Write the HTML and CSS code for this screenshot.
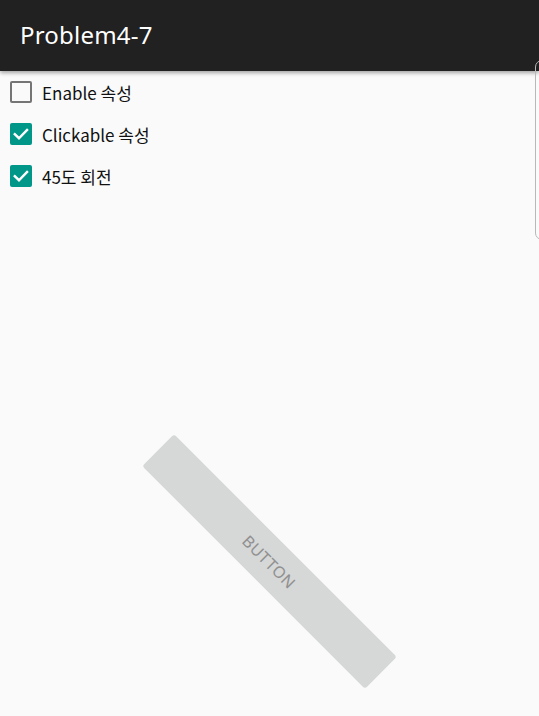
FILE: index.html
```html
<!DOCTYPE html>
<html>
<head>
<meta charset="utf-8">
<link rel="stylesheet" href="styles.css">
</head>
<body>
<div class="app">
  <header class="toolbar"><span class="title">Problem4-7</span></header>
  <main class="content">
    <label class="row"><span class="box"></span><span class="label">Enable 속성</span></label>
    <label class="row"><span class="box checked"><svg viewBox="0 0 24 24" width="22" height="22"><path d="M5.2 12.2 L9.8 16.6 L18.6 7.6" fill="none" stroke="#fff" stroke-width="2.6" stroke-linecap="square"/></svg></span><span class="label">Clickable 속성</span></label>
    <label class="row"><span class="box checked"><svg viewBox="0 0 24 24" width="22" height="22"><path d="M5.2 12.2 L9.8 16.6 L18.6 7.6" fill="none" stroke="#fff" stroke-width="2.6" stroke-linecap="square"/></svg></span><span class="label">45도 회전</span></label>
    <div class="stage">
      <div class="btn">BUTTON</div>
    </div>
  </main>
  <div class="edge"></div>
</div>
</body>
</html>
```
FILE: styles.css
```css
html, body { margin: 0; padding: 0; }
body {
  width: 539px; height: 716px; overflow: hidden;
  background: #fafafa;
  font-family: "Noto Sans", "Noto Sans CJK KR", sans-serif;
}
.app { position: relative; width: 539px; height: 716px; }
.toolbar {
  height: 71px; background: #212121;
  display: flex; align-items: center; padding-left: 20px;
  box-shadow: 0 2px 4px rgba(0,0,0,0.35);
  position: relative; z-index: 2;
}
.title { color: #fff; font-size: 24px; letter-spacing: 0.2px; margin-top: -2px; }
.content { display: flex; flex-direction: column; padding-top: 10px; }
.row { display: flex; align-items: center; height: 22px; margin-bottom: 20px; padding-left: 10px; }
.box {
  width: 22px; height: 22px; box-sizing: border-box;
  border: 2.5px solid #757575; border-radius: 2px;
  display: flex; align-items: center; justify-content: center;
}
.box.checked { background: #009688; border: none; }
.box svg { display: block; }
.label { margin-left: 10px; font-size: 17px; color: #111; font-family: "Noto Sans CJK KR", sans-serif; }
.stage { display: flex; justify-content: center; margin-top: 332px; }
.btn {
  width: 315px; height: 45px; background: #d6d7d7; border-radius: 3px;
  transform: rotate(45deg);
  display: flex; align-items: center; justify-content: center;
  color: #909090; font-size: 16px; letter-spacing: 0.5px;
  font-family: "Noto Sans", sans-serif;
}
.edge {
  position: absolute; right: -10px; top: 60px; width: 14px; height: 180px;
  border: 1.5px solid #b8b8b8; border-radius: 8px; box-sizing: border-box;
  z-index: 3;
}
```
